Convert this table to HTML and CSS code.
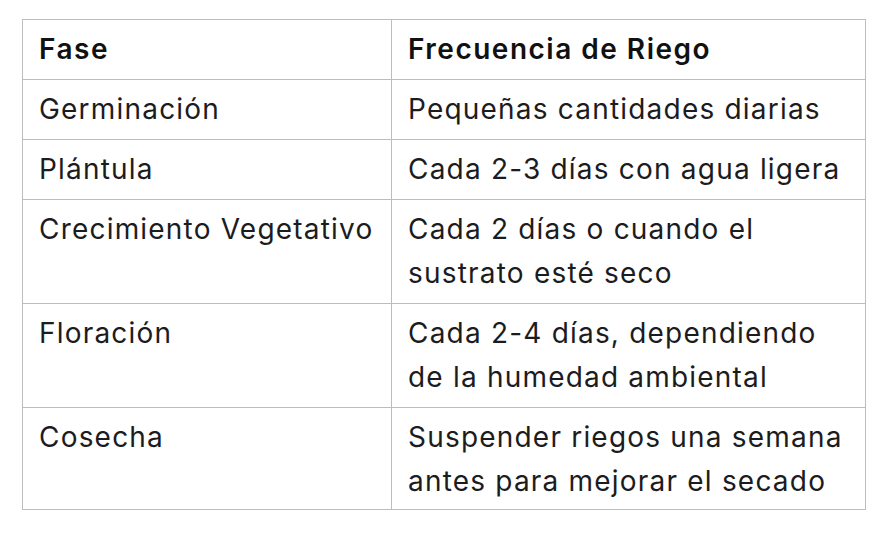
FILE: index.html
```html
<!DOCTYPE html>
<html lang="es">
<head>
<meta charset="utf-8">
<link rel="stylesheet" href="styles.css">
<title>Riego</title>
</head>
<body>
<table class="tabla">
  <thead>
    <tr><th class="col-fase">Fase</th><th class="col-freq">Frecuencia de Riego</th></tr>
  </thead>
  <tbody>
    <tr><td class="fase">Germinación</td><td>Pequeñas cantidades diarias</td></tr>
    <tr><td class="fase">Plántula</td><td>Cada 2-3 días con agua ligera</td></tr>
    <tr><td class="fase">Crecimiento Vegetativo</td><td>Cada 2 días o cuando el sustrato esté seco</td></tr>
    <tr><td class="fase">Floración</td><td>Cada 2-4 días, dependiendo de la humedad ambiental</td></tr>
    <tr class="ultima"><td class="fase">Cosecha</td><td>Suspender riegos una semana antes para mejorar el secado</td></tr>
  </tbody>
</table>
</body>
</html>
```
FILE: styles.css
```css
html, body { background: #ffffff; }
body {
  margin: 0;
  padding: 19px 0 0 22px;
  font-family: "Inter", "Noto Sans", sans-serif;
  color: #1c1c1e;
}
.tabla {
  border-collapse: collapse;
  table-layout: fixed;
  width: 842px;
  font-size: 28px;
  line-height: 44px;
  letter-spacing: 1.2px;
}
.col-fase { width: 336px; }
.col-freq { width: 441px; }
.tabla th, .tabla td {
  border: 1px solid #bdbdbd;
  padding: 7px 16px 8px 16px;
  text-align: left;
  vertical-align: top;
}
.tabla th {
  font-weight: 600;
  color: #111111;
  letter-spacing: 1.5px;
}
.tabla td { font-weight: 400; }
.tabla td.fase { white-space: nowrap; }
.tabla .ultima td { padding-bottom: 6px; }
```
